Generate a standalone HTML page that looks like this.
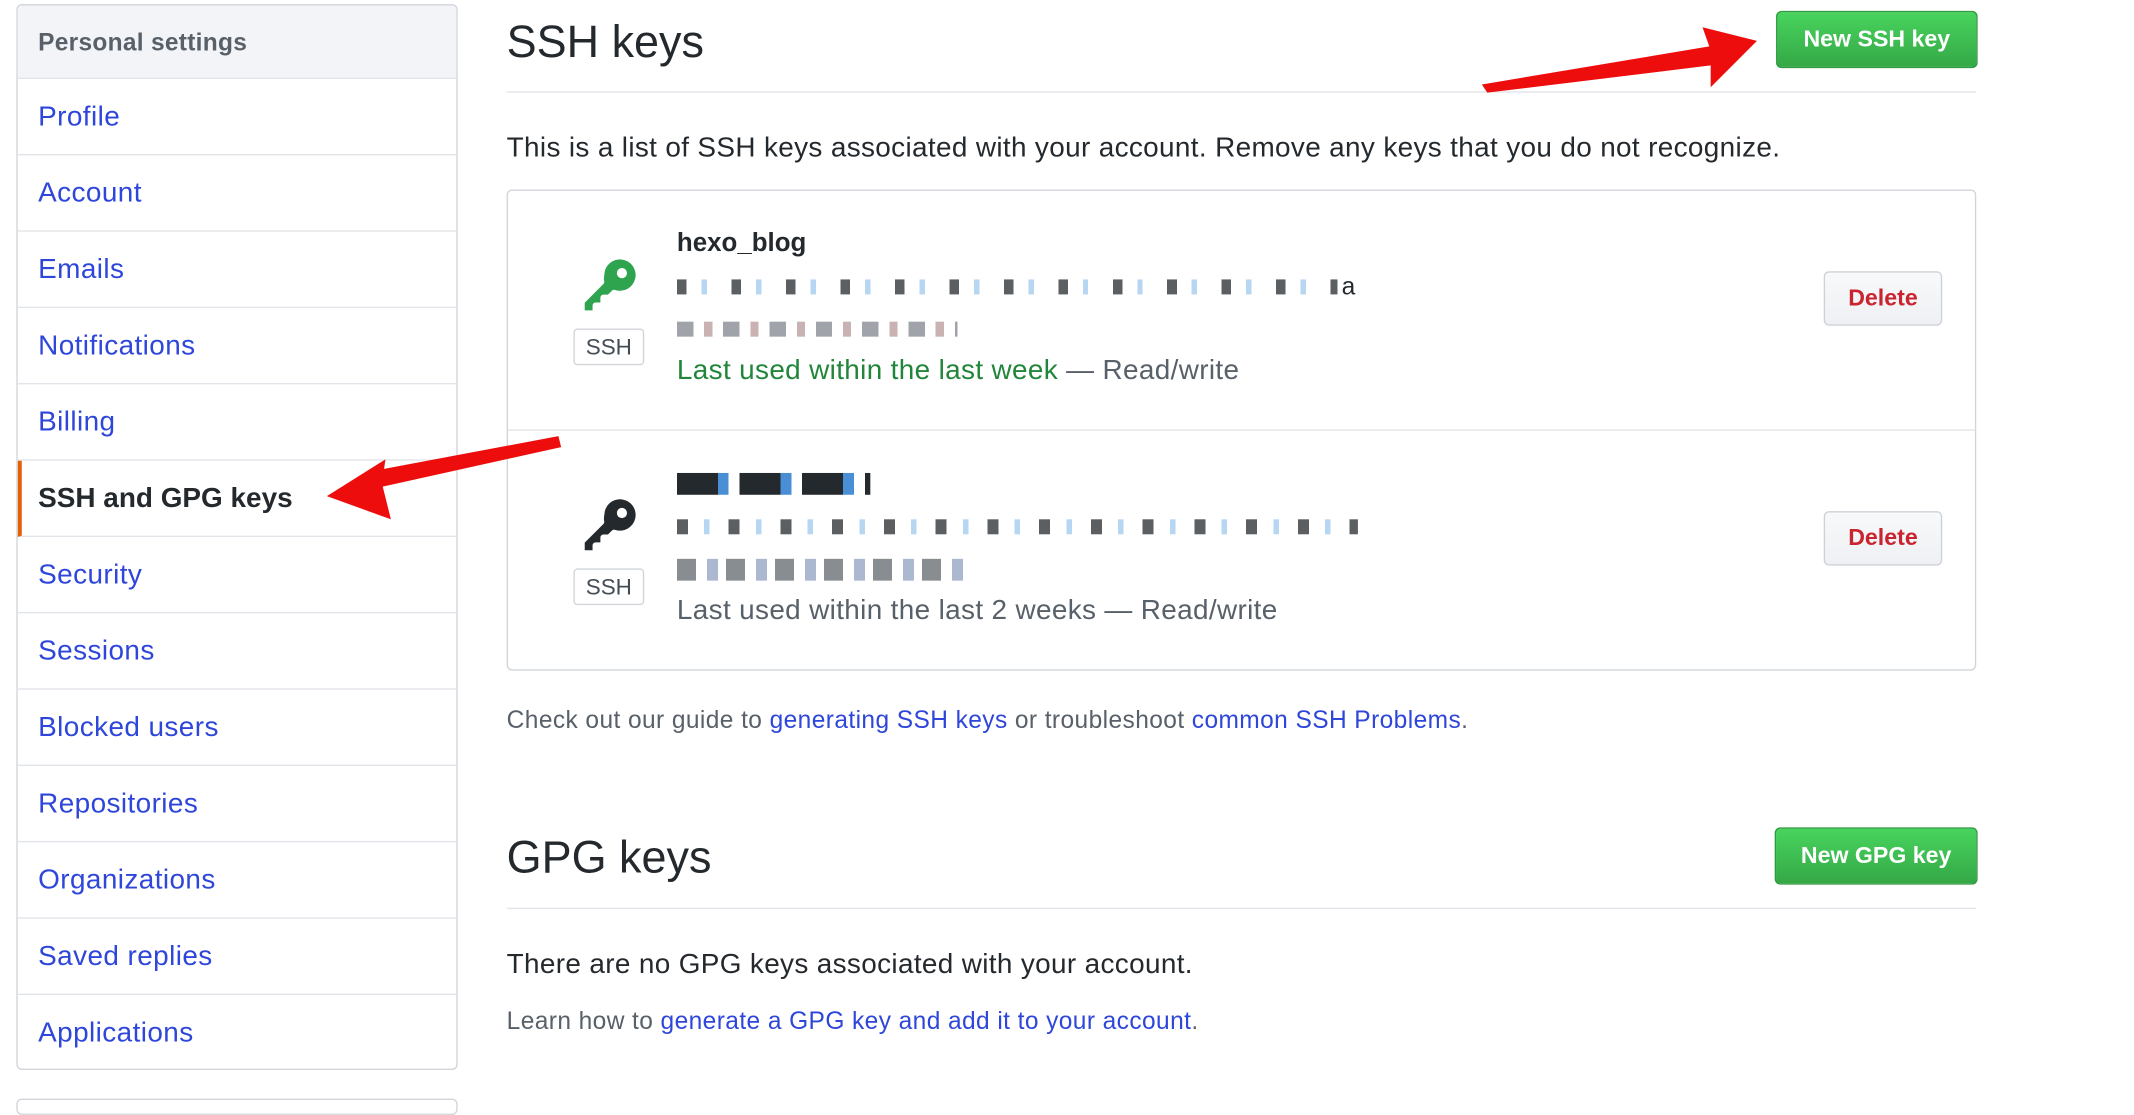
<!DOCTYPE html>
<html><head><meta charset="utf-8"><style>
html,body{margin:0;padding:0;background:#fff;width:2134px;height:1106px;overflow:hidden}
#w{position:absolute;left:0;top:0;width:1567px;height:812px;transform:scale(1.362,1.363);transform-origin:0 0;font-family:"Liberation Sans",Arial,sans-serif;color:#24292e}
.a{position:absolute;white-space:nowrap}
.side{left:12px;top:3px;width:322px;height:780px;border:1px solid #d1d5da;border-radius:4px;overflow:hidden}
.side .h{height:53px;background:#f3f4f7;border-bottom:1px solid #e1e4e8;font-weight:bold;color:#586069;font-size:18px;line-height:54px;padding-left:15px;letter-spacing:.2px}
.side .i{height:55px;border-bottom:1px solid #e1e4e8;font-size:20.5px;letter-spacing:.3px;line-height:56px;padding-left:15px;color:#2e46d9}
.side .act{color:#24292e;font-weight:bold;border-left:3px solid #e36209;padding-left:12px;letter-spacing:0}
.btn{background:linear-gradient(#48d45e,#35a846);border:1px solid #2e9a3f;border-radius:4px;color:#fff;font-weight:bold;font-size:17px;text-align:center}
.del{background:linear-gradient(#f8f9fa,#eef0f3);border:1px solid #cdd1d6;border-radius:4px;color:#cb2431;font-weight:bold;font-size:17px;text-align:center;width:85px;height:38px;line-height:38px}
.ssh{border:1px solid #d1d5da;border-radius:3px;font-size:16.5px;color:#444d56;width:50px;height:25px;line-height:26px;text-align:center}
.t{font-size:20.5px;letter-spacing:.25px}
.s{font-size:18px;letter-spacing:.3px;color:#586069}
a{color:#2e46d9;text-decoration:none}
</style></head><body><div id="w">
<div class="a side">
<div class="h">Personal settings</div>
<div class="i">Profile</div><div class="i">Account</div><div class="i">Emails</div><div class="i">Notifications</div><div class="i">Billing</div>
<div class="i act">SSH and GPG keys</div>
<div class="i">Security</div><div class="i">Sessions</div><div class="i">Blocked users</div><div class="i">Repositories</div><div class="i">Organizations</div><div class="i">Saved replies</div><div class="i" style="border-bottom:none">Applications</div>
</div>
<div class="a" style="left:12px;top:806px;width:322px;height:10px;border:1px solid #d1d5da;border-radius:4px"></div>

<div class="a" style="left:372px;top:12px;font-size:33px">SSH keys</div>
<div class="a btn" style="left:1304px;top:8px;width:146px;height:40px;line-height:40px">New SSH key</div>
<div class="a" style="left:372px;top:67px;width:1079px;height:1px;background:#e1e4e8"></div>
<div class="a t" style="left:372px;top:97px">This is a list of SSH keys associated with your account. Remove any keys that you do not recognize.</div>

<div class="a" style="left:372px;top:139px;width:1077px;height:351px;border:1px solid #d1d5da;border-radius:4px"></div>
<div class="a" style="left:373px;top:315px;width:1077px;height:1px;background:#e1e4e8"></div>

<svg class="a" style="left:425px;top:186px" width="46" height="46" viewBox="0 0 16 16"><path fill="#2ea44f" d="M6.5 5.5a4 4 0 1 1 2.731 3.795.75.75 0 0 0-.768.18L7.44 10.5H6.25a.75.75 0 0 0-.75.75v1.25H4.25a.75.75 0 0 0-.75.75v1.25H1.5v-1.94l4.768-4.768a.75.75 0 0 0 .18-.768A4 4 0 0 1 6.5 5.5Z"/><circle cx="11" cy="5" r="1.3" fill="#fff"/></svg>
<div class="a ssh" style="left:421px;top:241px">SSH</div>
<div class="a" style="left:497px;top:168px;font-size:19px;font-weight:bold">hexo_blog</div>
<div class="a" style="left:497px;top:205px;width:485px;height:11px;background:repeating-linear-gradient(90deg,#24292e 0 7px,transparent 7px 18px,#9fc8ee 18px 22px,transparent 22px 40px);opacity:.75"></div>
<div class="a" style="left:985px;top:200px;font-size:18px">a</div>
<div class="a" style="left:497px;top:236px;width:206px;height:11px;background:repeating-linear-gradient(90deg,#777d85 0 12px,transparent 12px 20px,#b09090 20px 26px,transparent 26px 34px);opacity:.7"></div>
<div class="a t" style="left:497px;top:260px;color:#22863a">Last used within the last week <span style="color:#586069">— Read/write</span></div>
<div class="a del" style="left:1339px;top:199px">Delete</div>

<svg class="a" style="left:425px;top:362px" width="46" height="46" viewBox="0 0 16 16"><path fill="#24292e" d="M6.5 5.5a4 4 0 1 1 2.731 3.795.75.75 0 0 0-.768.18L7.44 10.5H6.25a.75.75 0 0 0-.75.75v1.25H4.25a.75.75 0 0 0-.75.75v1.25H1.5v-1.94l4.768-4.768a.75.75 0 0 0 .18-.768A4 4 0 0 1 6.5 5.5Z"/><circle cx="11" cy="5" r="1.3" fill="#fff"/></svg>
<div class="a ssh" style="left:421px;top:417px">SSH</div>
<div class="a" style="left:497px;top:347px;width:142px;height:16px;background:repeating-linear-gradient(90deg,#24292e 0 30px,#4a8fd6 30px 38px,transparent 38px 46px)"></div>
<div class="a" style="left:497px;top:381px;width:500px;height:11px;background:repeating-linear-gradient(90deg,#24292e 0 8px,transparent 8px 20px,#9fc8ee 20px 24px,transparent 24px 38px);opacity:.75"></div>
<div class="a" style="left:497px;top:410px;width:212px;height:16px;background:repeating-linear-gradient(90deg,#555b63 0 14px,transparent 14px 22px,#8899bb 22px 30px,transparent 30px 36px);opacity:.7"></div>
<div class="a t" style="left:497px;top:436px;color:#586069">Last used within the last 2 weeks — Read/write</div>
<div class="a del" style="left:1339px;top:375px">Delete</div>

<div class="a s" style="left:372px;top:518px">Check out our guide to <a>generating SSH keys</a> or troubleshoot <a>common SSH Problems</a>.</div>

<div class="a" style="left:372px;top:610px;font-size:33px">GPG keys</div>
<div class="a btn" style="left:1303px;top:607px;width:147px;height:40px;line-height:40px">New GPG key</div>
<div class="a" style="left:372px;top:666px;width:1079px;height:1px;background:#e1e4e8"></div>
<div class="a t" style="left:372px;top:696px">There are no GPG keys associated with your account.</div>
<div class="a s" style="left:372px;top:739px">Learn how to <a>generate a GPG key and add it to your account</a>.</div>

<svg class="a" style="left:0;top:0" width="1567" height="806">
<polygon fill="#ee0d0d" points="1088,62 1255,34 1250,20 1290,30 1256,64 1256,48 1092,68"/>
<polygon fill="#ee0d0d" points="410,320 412,328 281,357 287,381 240,364 283,337 282,344"/>
</svg>
</div></body></html>
